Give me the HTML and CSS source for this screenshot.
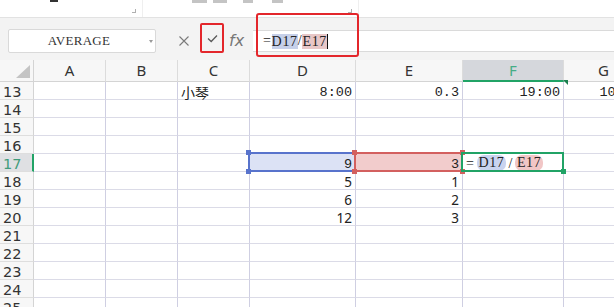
FILE: index.html
```html
<!DOCTYPE html>
<html lang="zh-CN">
<head>
  <meta charset="UTF-8">
  <meta name="viewport" content="width=device-width, initial-scale=1.0">
  <title>Formula Bar</title>
  <link rel="stylesheet" href="styles.css">
</head>
<body>
  <!-- Ribbon bottom edge -->
  <div class="toolbar">
    <div class="tool-group group-a">
      <div class="stubs"><span class="stub dark"></span></div>
      <span class="launcher"></span>
    </div>
    <div class="tool-group group-b">
      <div class="stubs">
        <span class="stub s1"></span>
        <span class="stub s2"></span>
        <span class="stub s3"></span>
        <span class="stub s4"></span>
      </div>
      <span class="launcher"></span>
    </div>
  </div>

  <!-- Formula bar -->
  <div class="formula-bar">
    <div class="name-box">
      <span class="name">AVERAGE</span>
      <i class="caret"></i>
    </div>
    <div class="tools">
      <svg class="cancel" width="12" height="12" viewBox="0 0 12 12">
        <path d="M1.5 1.5 L10.5 10.5 M10.5 1.5 L1.5 10.5" stroke="#7a7a7a" stroke-width="1.1" fill="none"/>
      </svg>
      <span class="confirm">
        <svg width="11" height="9" viewBox="0 0 11 9">
          <path d="M1 4.5 L4.2 7.5 L10 1.5" stroke="#5a5a5a" stroke-width="1.3" fill="none"/>
        </svg>
      </span>
      <span class="fx">fx</span>
    </div>
    <div class="formula-input">=<span class="hl-blue">D17</span>/<span class="hl-red">E17</span><span class="cursor"></span></div>
    <div class="callout"></div>
  </div>

  <!-- Sheet grid -->
  <div class="sheet">
    <div class="hd corner"><svg width="14" height="13" viewBox="0 0 14 13"><path d="M14 0 L14 13 L0 13 Z" fill="#c4c4c4"/></svg></div>
    <div class="hd">A</div>
    <div class="hd">B</div>
    <div class="hd">C</div>
    <div class="hd">D</div>
    <div class="hd">E</div>
    <div class="hd active">F</div>
    <div class="hd">G</div>

    <div class="rn">13</div>
    <div class="c"></div><div class="c"></div>
    <div class="c cjk">小琴</div>
    <div class="c r">8:00</div>
    <div class="c r">0.3</div>
    <div class="c r">19:00</div>
    <div class="c r">10:00</div>

    <div class="rn">14</div>
    <div class="c"></div><div class="c"></div><div class="c"></div><div class="c"></div><div class="c"></div><div class="c"></div><div class="c"></div>
    <div class="rn">15</div>
    <div class="c"></div><div class="c"></div><div class="c"></div><div class="c"></div><div class="c"></div><div class="c"></div><div class="c"></div>
    <div class="rn">16</div>
    <div class="c"></div><div class="c"></div><div class="c"></div><div class="c"></div><div class="c"></div><div class="c"></div><div class="c"></div>

    <div class="rn active">17</div>
    <div class="c"></div><div class="c"></div><div class="c"></div>
    <div class="c r ref-cell fill-blue">9
      <span class="ref-box blue"><i class="handle tl"></i><i class="handle bl"></i></span>
    </div>
    <div class="c r ref-cell fill-red">3
      <span class="ref-box red"><i class="handle tl"></i><i class="handle bl"></i><i class="handle tr"></i><i class="handle br"></i></span>
    </div>
    <div class="c ref-cell edit">=<span class="pill blue">D17</span>/<span class="pill red">E17</span>
      <span class="ref-box green"><i class="handle br"></i></span>
    </div>
    <div class="c"></div>

    <div class="rn">18</div>
    <div class="c"></div><div class="c"></div><div class="c"></div>
    <div class="c r num">5</div><div class="c r num">1</div><div class="c"></div><div class="c"></div>
    <div class="rn">19</div>
    <div class="c"></div><div class="c"></div><div class="c"></div>
    <div class="c r num">6</div><div class="c r num">2</div><div class="c"></div><div class="c"></div>
    <div class="rn">20</div>
    <div class="c"></div><div class="c"></div><div class="c"></div>
    <div class="c r num">12</div><div class="c r num">3</div><div class="c"></div><div class="c"></div>

    <div class="rn">21</div>
    <div class="c"></div><div class="c"></div><div class="c"></div><div class="c"></div><div class="c"></div><div class="c"></div><div class="c"></div>
    <div class="rn">22</div>
    <div class="c"></div><div class="c"></div><div class="c"></div><div class="c"></div><div class="c"></div><div class="c"></div><div class="c"></div>
    <div class="rn">23</div>
    <div class="c"></div><div class="c"></div><div class="c"></div><div class="c"></div><div class="c"></div><div class="c"></div><div class="c"></div>
    <div class="rn">24</div>
    <div class="c"></div><div class="c"></div><div class="c"></div><div class="c"></div><div class="c"></div><div class="c"></div><div class="c"></div>
    <div class="rn">25</div>
    <div class="c"></div><div class="c"></div><div class="c"></div><div class="c"></div><div class="c"></div><div class="c"></div><div class="c"></div>
  </div>
</body>
</html>
```

FILE: styles.css
```css
* {
    box-sizing: border-box;
}
body {
    margin: 0;
    width: 614px;
    height: 307px;
    overflow: hidden;
    background: #fff;
    font-family: "Noto Sans", sans-serif;
    color: #333;
}

/* ribbon edge */
.toolbar {
    display: flex;
    height: 18px;
    background: #fff;
    border-bottom: 1px solid #e2e2e2;
}
.tool-group {
    position: relative;
    border-right: 1px solid #efefef;
}
.group-a {
    width: 143px;
}
.group-b {
    width: 216px;
}
.stubs {
    display: flex;
    align-items: flex-start;
}
.group-a .stubs {
    padding-left: 50px;
}
.group-b .stubs {
    padding-left: 49px;
}
.stub {
    height: 3px;
    background: #c4c4c4;
}
.stub.dark {
    width: 8px;
    height: 2px;
    background: #333;
}
.s1 { width: 15px; }
.s2 { width: 14px; margin-left: 6px; }
.s3 { width: 10px; margin-left: 16px; }
.s4 { width: 11px; margin-left: 19px; }
.launcher {
    position: absolute;
    right: 6px;
    bottom: 4px;
    width: 4px;
    height: 4px;
    border-right: 1px solid #b0b0b0;
    border-bottom: 1px solid #b0b0b0;
}

/* formula bar */
.formula-bar {
    position: relative;
    display: flex;
    align-items: center;
    height: 42px;
    padding: 4px 0 0 8px;
    background: #f3f3f3;
}
.name-box {
    display: flex;
    align-items: center;
    width: 148px;
    height: 24px;
    background: #fff;
    border: 1px solid #d9d9d9;
    border-radius: 2px;
    font-family: "Liberation Serif", serif;
    font-size: 13px;
    letter-spacing: 0.3px;
    color: #333;
}
.name {
    flex: 1;
    text-align: center;
}
.caret {
    width: 0;
    height: 0;
    margin-right: 2px;
    border-left: 2.5px solid transparent;
    border-right: 2.5px solid transparent;
    border-top: 3px solid #9a9a9a;
}
.tools {
    display: flex;
    align-items: center;
    margin-left: 22px;
}
.confirm {
    display: flex;
    align-items: center;
    justify-content: center;
    width: 24px;
    height: 30px;
    margin: 0 0 6px 10px;
    border: 2px solid #e3262b;
    border-radius: 2px;
}
.fx {
    width: 16px;
    margin-left: 5px;
    font-family: "DejaVu Sans", sans-serif;
    font-style: italic;
    font-size: 16px;
    color: #777;
    line-height: 1;
}
.formula-input {
    flex: 1;
    display: flex;
    align-items: center;
    height: 22px;
    margin-left: 8px;
    padding-left: 10px;
    background: #fff;
    border-top: 1px solid #dadada;
    border-bottom: 1px solid #dadada;
    font-family: "Liberation Serif", serif;
    font-size: 14px;
    letter-spacing: 0.7px;
    color: #222;
}
.hl-blue {
    background: #c6d0e9;
    line-height: 15px;
}
.hl-red {
    background: #e8c7c7;
    line-height: 15px;
}
.cursor {
    width: 1px;
    height: 15px;
    background: #111;
}
.callout {
    position: absolute;
    left: 256px;
    top: -5px;
    width: 103px;
    height: 44px;
    border: 2px solid #e3262b;
    border-radius: 3px;
    z-index: 1;
}

/* sheet */
.sheet {
    display: grid;
    grid-template-columns: 34px 72px 72px 72px 106px 107px 101px 80px;
    grid-template-rows: 22px;
    grid-auto-rows: 18px;
    width: 644px;
}
.hd {
    background: #f7f7f7;
    border-right: 1px solid #dcdcdc;
    border-bottom: 1px solid #d4d4d4;
    font-size: 15px;
    line-height: 21px;
    text-align: center;
    color: #333;
}
.hd.corner {
    display: flex;
    align-items: flex-end;
    justify-content: flex-end;
    padding: 0 3px 3px 0;
    border-right-color: #d4d4d4;
}
.hd.active {
    position: relative;
    background: #d5d7dc;
    color: #45ad87;
    border-bottom: 2px solid #21a366;
}
.hd.active::after {
    content: "";
    position: absolute;
    right: -5px;
    bottom: -5px;
    border-top: 5px solid #1b7f4f;
    border-left: 5px solid transparent;
}
.rn {
    padding: 2px 0 0 3px;
    background: #f7f7f7;
    border-right: 1px solid #d4d4d4;
    border-bottom: 1px solid #dedede;
    font-family: "DejaVu Sans", sans-serif;
    font-size: 14.5px;
    line-height: 16px;
    color: #333;
}
.rn.active {
    background: #dfe0e3;
    color: #3f9c7b;
    border-right: 2px solid #21a366;
}
.c {
    padding: 3px 3px 0;
    border-right: 1px solid #cfcfe2;
    border-bottom: 1px solid #dbdbe7;
    font-family: "Liberation Mono", monospace;
    font-size: 13.5px;
    line-height: 15px;
    white-space: nowrap;
    color: #222;
}
.r {
    text-align: right;
}
.num {
    font-family: "Noto Sans", sans-serif;
    font-size: 13.5px;
}
.cjk {
    padding-left: 3px;
    font-family: "Noto Sans CJK SC", sans-serif;
    font-size: 14px;
}

/* referenced ranges */
.ref-cell {
    position: relative;
}
.fill-blue {
    background: #dce2f5;
}
.fill-red {
    background: #f2cccc;
}
.edit {
    display: flex;
    align-items: center;
    padding: 1px 0 0 3px;
    font-family: "Liberation Serif", serif;
    font-size: 14px;
    letter-spacing: 0.6px;
}
.pill {
    margin: 0 2px;
    padding: 0 2px;
    border-radius: 7px;
    line-height: 16px;
}
.pill.blue {
    background: #c9d3ef;
}
.pill.red {
    background: #f1c6c6;
}
.ref-box {
    position: absolute;
    top: -2px;
    left: -2px;
    right: -1px;
    bottom: -1px;
    border: 2px solid;
}
.ref-box.blue {
    border-color: #5873cc;
}
.ref-box.red {
    border-color: #d3605f;
}
.ref-box.green {
    border-color: #21a366;
}
.handle {
    position: absolute;
    width: 5px;
    height: 5px;
}
.blue .handle { background: #5873cc; }
.red .handle { background: #d3605f; }
.green .handle { background: #21a366; }
.handle.tl { top: -4px; left: -4px; }
.handle.bl { bottom: -4px; left: -4px; }
.handle.tr { top: -4px; right: -4px; }
.handle.br { bottom: -4px; right: -4px; }
```
